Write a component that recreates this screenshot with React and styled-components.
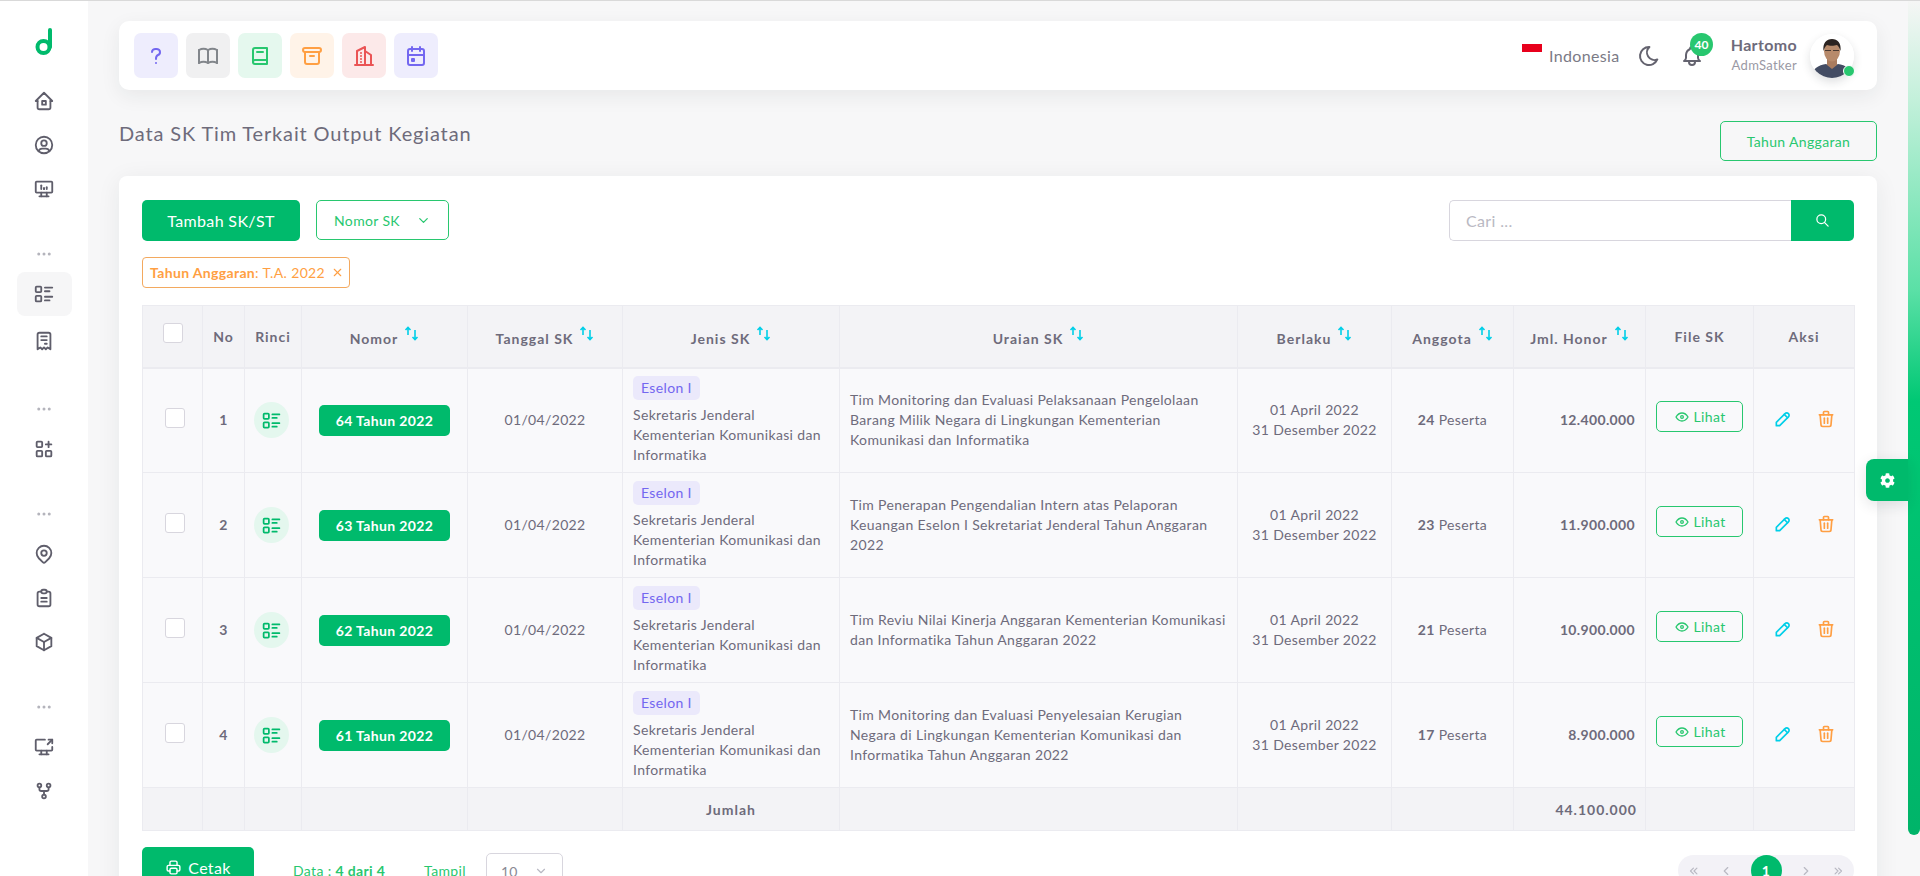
import React from "react";
import styled, { createGlobalStyle } from "styled-components";
import {
    TbApps,
    TbArchive,
    TbBell,
    TbBook,
    TbBook2,
    TbBox,
    TbBuildingSkyscraper,
    TbCalendarEvent,
    TbChevronDown,
    TbChevronLeft,
    TbChevronRight,
    TbChevronsLeft,
    TbChevronsRight,
    TbClipboardText,
    TbDeviceDesktopAnalytics,
    TbDots,
    TbEye,
    TbGitFork,
    TbHome2,
    TbListDetails,
    TbMapPin,
    TbMoon,
    TbPencil,
    TbPrinter,
    TbQuestionMark,
    TbReceipt,
    TbScreenShare,
    TbSearch,
    TbTrash,
    TbUserCircle,
    TbX,
} from "react-icons/tb";
import { FaCog } from "react-icons/fa";

const GREEN = "#00ba6c";
const TEXT = "#6e6b7b";
const LINE = "#ebebf0";

const GlobalStyle = createGlobalStyle`
    * { box-sizing: border-box; }
    html, body {
        margin: 0;
        height: 876px;
        overflow: hidden;
        background: #f7f7f8;
        font-family: "Lato", "Noto Sans", sans-serif;
        font-size: 14px;
        letter-spacing: 0.35px;
        color: ${TEXT};
    }
`;

const Page = styled.div`
    position: relative;
    display: flex;
    height: 876px;
    overflow: hidden;
    border-top: 1px solid #d9d9d9;
`;

const Sidebar = styled.nav`
    width: 88px;
    flex-shrink: 0;
    background: #fff;
    display: flex;
    flex-direction: column;
    align-items: center;
    padding-top: 26px;
`;

const Logo = styled.svg`
    width: 18px;
    height: 28px;
    margin-bottom: 24px;
    margin-left: -1px;
`;

const NavDots = styled.div`
    height: 36px;
    margin-top: ${(p) => p.$top || 25}px;
    color: #b4b4bc;
    font-size: 18px;
    display: flex;
    align-items: center;
    justify-content: center;
`;

const NavItem = styled.div`
    width: 55px;
    height: ${(p) => p.$height || 44}px;
    border-radius: 8px;
    display: flex;
    align-items: center;
    justify-content: center;
    color: #5f5e6b;
    font-size: 22px;
    background: ${(p) => (p.$active ? "#f6f6f7" : "transparent")};
`;

const Main = styled.main`
    flex: 1;
    min-width: 0;
    padding: 20px 43px 0 31px;
`;

const Header = styled.header`
    height: 69px;
    background: #fff;
    border-radius: 10px;
    box-shadow: 0 6px 20px rgba(34, 41, 47, 0.07);
    display: flex;
    align-items: center;
    justify-content: space-between;
    padding: 0 23px 0 15px;
`;

const QuickLinks = styled.div`
    display: flex;
    gap: 8px;
`;

const QuickLink = styled.div`
    width: 44px;
    height: 45px;
    border-radius: 7px;
    display: flex;
    align-items: center;
    justify-content: center;
    font-size: 24px;
    color: ${(p) => p.$color};
    background: ${(p) => p.$bg};
`;

const HeaderRight = styled.div`
    display: flex;
    align-items: center;
`;

const Flag = styled.span`
    width: 20px;
    height: 8px;
    background: #e8001c;
    margin: -2px 7px 0 0;
    align-self: flex-start;
`;

const Language = styled.div`
    display: flex;
    align-items: center;
    font-size: 16px;
    line-height: 20px;
    color: #7b7a86;
    width: 98px;
    height: 20px;
    white-space: nowrap;
`;

const HeaderIcon = styled.div`
    font-size: ${(p) => p.$size || 24}px;
    color: #64636f;
    display: flex;
    margin-left: ${(p) => p.$left}px;
    position: relative;
`;

const Badge = styled.span`
    position: absolute;
    left: 10px;
    top: -11px;
    width: 23px;
    height: 23px;
    border-radius: 50%;
    background: #28c76f;
    color: #fff;
    font-size: 12px;
    font-weight: 700;
    letter-spacing: 0;
    display: flex;
    align-items: center;
    justify-content: center;
`;

const UserInfo = styled.div`
    margin-left: 24px;
    margin-top: -2px;
    text-align: right;
    width: 69px;
`;

const UserName = styled.div`
    font-size: 16px;
    font-weight: 700;
    line-height: 20px;
    white-space: nowrap;
`;

const UserRole = styled.div`
    font-size: 13px;
    line-height: 20px;
    color: #9a99a4;
    white-space: nowrap;
`;

const Avatar = styled.div`
    position: relative;
    width: 44px;
    height: 44px;
    margin-left: 13px;
    border-radius: 50%;
    box-shadow: 0 4px 10px rgba(34, 41, 47, 0.15);
`;

const AvatarImage = styled.svg`
    width: 44px;
    height: 44px;
    display: block;
    border-radius: 50%;
`;

const OnlineDot = styled.span`
    position: absolute;
    right: -1px;
    bottom: 1px;
    width: 12px;
    height: 12px;
    border-radius: 50%;
    background: #28c76f;
    border: 1px solid #fff;
`;

const TitleRow = styled.div`
    display: flex;
    align-items: flex-start;
    justify-content: space-between;
    margin-top: 31px;
    height: 40px;
`;

const PageTitle = styled.h1`
    margin: 0;
    font-size: 20px;
    font-weight: 400;
    line-height: 24px;
    color: #6e6b7b;
    letter-spacing: 0.85px;
`;

const OutlineButton = styled.div`
    width: ${(p) => p.$width}px;
    height: ${(p) => p.$height}px;
    border: 1px solid #28c76f;
    border-radius: 5px;
    color: #28c76f;
    display: flex;
    align-items: center;
    justify-content: center;
    gap: ${(p) => p.$gap || 0}px;
    font-size: 14px;
    background: ${(p) => p.$fill || "transparent"};
`;

const Card = styled.section`
    margin-top: 15px;
    background: #fff;
    border-radius: 8px;
    box-shadow: 0 4px 24px rgba(34, 41, 47, 0.07);
    padding: 24px 23px;
`;

const Toolbar = styled.div`
    display: flex;
    align-items: flex-start;
    gap: 16px;
`;

const SolidButton = styled.div`
    width: ${(p) => p.$width}px;
    height: 41px;
    background: ${GREEN};
    color: #fff;
    border-radius: 5px;
    font-size: 16px;
    display: flex;
    align-items: center;
    justify-content: center;
    gap: 6px;
    flex-shrink: 0;
`;

const Search = styled.div`
    display: flex;
    width: 405px;
    height: 41px;
    margin-left: auto;
`;

const SearchInput = styled.div`
    flex: 1;
    border: 1px solid #d8d6de;
    border-right: 0;
    border-radius: 5px 0 0 5px;
    color: #b9b9c3;
    font-size: 16px;
    padding-left: 16px;
    display: flex;
    align-items: center;
`;

const SearchButton = styled.div`
    width: 63px;
    background: ${GREEN};
    color: #fff;
    border-radius: 0 5px 5px 0;
    font-size: 15px;
    display: flex;
    align-items: center;
    justify-content: center;
`;

const FilterTag = styled.div`
    display: inline-flex;
    align-items: center;
    height: 31px;
    width: 208px;
    margin-top: 16px;
    padding-left: 7px;
    border: 1px solid #f3a95f;
    border-radius: 4px;
    color: #ff9f43;
    font-size: 14px;
    white-space: nowrap;
    b {
        font-weight: 700;
    }
    svg {
        margin-left: 6px;
    }
`;

const Table = styled.table`
    display: table;
    width: 100%;
    margin-top: 17px;
    table-layout: fixed;
    border-collapse: collapse;
    border: 1px solid ${LINE};
`;

const Th = styled.th`
    height: 62px;
    background: #f3f3f6;
    border: 1px solid ${LINE};
    border-bottom-width: 2px;
    font-weight: 700;
    font-size: 14px;
    letter-spacing: 1px;
    color: ${TEXT};
    white-space: nowrap;
    padding: 0;
`;

const Td = styled.td`
    height: 105px;
    padding: 0 10px;
    background: #f9f9fb;
    border: 1px solid ${LINE};
    text-align: ${(p) => p.$align || "center"};
    line-height: 20px;
    font-weight: ${(p) => (p.$bold ? 700 : 400)};
    vertical-align: middle;
`;

const FootCell = styled.td`
    height: 43px;
    padding: 0 8px;
    background: #f3f3f6;
    border: 1px solid ${LINE};
    text-align: ${(p) => p.$align || "center"};
    font-weight: 700;
    letter-spacing: 1px;
`;

const SortIcon = styled.svg`
    width: 15px;
    height: 15px;
    margin-left: 6px;
    vertical-align: 3px;
`;

const CheckBox = styled.span`
    display: block;
    width: 20px;
    height: 20px;
    margin: ${(p) => p.$margin};
    background: #fff;
    border: 1px solid #d8d6de;
    border-radius: 3px;
`;

const RinciButton = styled.div`
    width: 35px;
    height: 36px;
    margin-left: -1px;
    border-radius: 50%;
    background: #e4f7ee;
    color: ${GREEN};
    font-size: 21px;
    display: flex;
    align-items: center;
    justify-content: center;
`;

const NumberBadge = styled.span`
    display: inline-block;
    padding: 0 17px;
    height: 31px;
    line-height: 31px;
    background: ${GREEN};
    color: #fff;
    border-radius: 5px;
    font-weight: 700;
    font-size: 14px;
    white-space: nowrap;
`;

const LevelPill = styled.span`
    display: inline-block;
    height: 24px;
    line-height: 24px;
    padding: 0 8px;
    background: #ebe9fb;
    color: #7367f0;
    border-radius: 5px;
    margin-bottom: 5px;
`;

const ActionRow = styled.div`
    display: flex;
    align-items: center;
    justify-content: center;
    gap: 23px;
    margin-top: -3px;
`;

const ActionIcon = styled.span`
    display: flex;
    font-size: 20px;
    color: ${(p) => p.$color};
`;

const FileCell = styled.div`
    display: flex;
    justify-content: center;
    margin-bottom: 7px;
`;

const TableFooter = styled.div`
    display: flex;
    align-items: flex-start;
    margin-top: 16px;
`;

const DataInfo = styled.div`
    color: #28c76f;
    margin: 14px 0 0 39px;
    white-space: nowrap;
    line-height: 20px;
`;

const PageSize = styled.div`
    width: 77px;
    height: 36px;
    margin: 6px 0 0 20px;
    border: 1px solid #d8d6de;
    border-radius: 5px;
    padding: 0 14px;
    display: flex;
    align-items: center;
    justify-content: space-between;
    color: #8a8994;
    svg {
        color: #b9b9c3;
    }
`;

const Pagination = styled.div`
    margin: 8px 0 0 auto;
    width: 176px;
    height: 31px;
    border-radius: 16px;
    background: #f3f2f7;
    display: flex;
    align-items: center;
    justify-content: space-between;
    padding: 0 9px;
    color: #b9b9c3;
    font-size: 14px;
`;

const PageCurrent = styled.span`
    width: 31px;
    height: 31px;
    border-radius: 50%;
    background: ${GREEN};
    color: #fff;
    font-weight: 700;
    display: flex;
    align-items: center;
    justify-content: center;
`;

const ScrollThumb = styled.div`
    position: absolute;
    top: 0;
    right: 0;
    width: 12px;
    height: 834px;
    border-radius: 0 0 8px 8px;
    background: linear-gradient(#f5f6f5 0, #c2f0da 100px, #5ae0a6 290px, #00c874 400px, #00b469 100%);
`;

const SettingsTab = styled.div`
    position: absolute;
    top: 458px;
    right: 12px;
    width: 42px;
    height: 42px;
    border-radius: 8px 0 0 8px;
    background: ${GREEN};
    color: #fff;
    font-size: 15px;
    display: flex;
    align-items: center;
    justify-content: center;
    box-shadow: 0 4px 14px rgba(34, 41, 47, 0.12);
`;

const quickLinks = [
    { icon: TbQuestionMark, color: "#7367f0", bg: "#eeedfd" },
    { icon: TbBook, color: "#82868b", bg: "#f0f0f1" },
    { icon: TbBook2, color: "#28c76f", bg: "#e5f8ee" },
    { icon: TbArchive, color: "#ff9f43", bg: "#fff3e8" },
    { icon: TbBuildingSkyscraper, color: "#ea5455", bg: "#fce9e9" },
    { icon: TbCalendarEvent, color: "#7367f0", bg: "#eeedfd" },
];

const columns = [
    { width: 60 },
    { label: "No", width: 42 },
    { label: "Rinci", width: 57 },
    { label: "Nomor", width: 166, sort: true },
    { label: "Tanggal SK", width: 155, sort: true },
    { label: "Jenis SK", width: 217, sort: true },
    { label: "Uraian SK", width: 398, sort: true },
    { label: "Berlaku", width: 154, sort: true },
    { label: "Anggota", width: 122, sort: true },
    { label: "Jml. Honor", width: 132, sort: true },
    { label: "File SK", width: 108 },
    { label: "Aksi", width: 101 },
];

const rows = [
    {
        no: 1,
        nomor: "64 Tahun 2022",
        uraian: "Tim Monitoring dan Evaluasi Pelaksanaan Pengelolaan Barang Milik Negara di Lingkungan Kementerian Komunikasi dan Informatika",
        anggota: 24,
        honor: "12.400.000",
    },
    {
        no: 2,
        nomor: "63 Tahun 2022",
        uraian: "Tim Penerapan Pengendalian Intern atas Pelaporan Keuangan Eselon I Sekretariat Jenderal Tahun Anggaran 2022",
        anggota: 23,
        honor: "11.900.000",
    },
    {
        no: 3,
        nomor: "62 Tahun 2022",
        uraian: "Tim Reviu Nilai Kinerja Anggaran Kementerian Komunikasi dan Informatika Tahun Anggaran 2022",
        anggota: 21,
        honor: "10.900.000",
    },
    {
        no: 4,
        nomor: "61 Tahun 2022",
        uraian: "Tim Monitoring dan Evaluasi Penyelesaian Kerugian Negara di Lingkungan Kementerian Komunikasi dan Informatika Tahun Anggaran 2022",
        anggota: 17,
        honor: "8.900.000",
    },
];

const SortArrows = () => (
    <SortIcon viewBox="0 0 15 15" fill="none" stroke="#00cfe8" strokeWidth="1.6">
        <path d="M4 9V1.5M1.5 4L4 1.5 6.5 4" />
        <path d="M11 4v9.5M8.5 11l2.5 2.5 2.5-2.5" />
    </SortIcon>
);

const Portrait = () => (
    <AvatarImage viewBox="0 0 44 44">
        <rect width="44" height="44" fill="#fff" />
        <path d="M1 44c0-9 8-13 15-14l6 3 6-3c7 1 15 5 15 14z" fill="#434c63" />
        <path d="M17 25h10v6l-5 4-5-4z" fill="#a97c5f" />
        <ellipse cx="22" cy="17" rx="8" ry="10.5" fill="#b78a6b" />
        <path d="M13.5 17c-1-8 3-12 8.500-12s9.500 4 8.500 12c-1-3-2-5-3.500-6-3 1-8 1-10 0-1.500 1-2.500 3-3.500 6z" fill="#2b2320" />
        <path d="M15 16.500h6M23 16.500h6" stroke="#4a3a33" strokeWidth="1" />
    </AvatarImage>
);

const App = () => {
    return (
        <Page>
            <GlobalStyle />
            <Sidebar>
                <Logo viewBox="0 0 18 28" fill="none" stroke="#00ba6c" strokeWidth="4" strokeLinecap="round">
                    <circle cx="8.500" cy="20" r="6" />
                    <path d="M15 20V3" />
                </Logo>
                <NavItem><TbHome2 /></NavItem>
                <NavItem><TbUserCircle /></NavItem>
                <NavItem><TbDeviceDesktopAnalytics /></NavItem>
                <NavDots><TbDots /></NavDots>
                <NavItem $active><TbListDetails /></NavItem>
                <NavItem $height={50}><TbReceipt /></NavItem>
                <NavDots><TbDots /></NavDots>
                <NavItem><TbApps /></NavItem>
                <NavDots><TbDots /></NavDots>
                <NavItem><TbMapPin /></NavItem>
                <NavItem><TbClipboardText /></NavItem>
                <NavItem><TbBox /></NavItem>
                <NavDots><TbDots /></NavDots>
                <NavItem><TbScreenShare /></NavItem>
                <NavItem><TbGitFork /></NavItem>
            </Sidebar>
            <Main>
                <Header>
                    <QuickLinks>
                        {quickLinks.map(({ icon: Icon, color, bg }, index) => (
                            <QuickLink key={index} $color={color} $bg={bg}>
                                <Icon />
                            </QuickLink>
                        ))}
                    </QuickLinks>
                    <HeaderRight>
                        <Language>
                            <Flag />
                            Indonesia
                        </Language>
                        <HeaderIcon $left={17} $size={24}>
                            <TbMoon />
                        </HeaderIcon>
                        <HeaderIcon $left={19} $size={24}>
                            <TbBell />
                            <Badge>40</Badge>
                        </HeaderIcon>
                        <UserInfo>
                            <UserName>Hartomo</UserName>
                            <UserRole>AdmSatker</UserRole>
                        </UserInfo>
                        <Avatar>
                            <Portrait />
                            <OnlineDot />
                        </Avatar>
                    </HeaderRight>
                </Header>
                <TitleRow>
                    <PageTitle>Data SK Tim Terkait Output Kegiatan</PageTitle>
                    <OutlineButton $width={157} $height={40}>Tahun Anggaran</OutlineButton>
                </TitleRow>
                <Card>
                    <Toolbar>
                        <SolidButton $width={158}>Tambah SK/ST</SolidButton>
                        <OutlineButton $width={133} $height={40} $gap={16} $fill="#fff">
                            Nomor SK
                            <TbChevronDown size={15} />
                        </OutlineButton>
                        <Search>
                            <SearchInput>Cari ...</SearchInput>
                            <SearchButton><TbSearch /></SearchButton>
                        </Search>
                    </Toolbar>
                    <FilterTag>
                        <b>Tahun Anggaran</b>: T.A. 2022
                        <TbX size={13} />
                    </FilterTag>
                    <Table>
                        <colgroup>
                            {columns.map((col, index) => (
                                <col key={index} width={col.width} />
                            ))}
                        </colgroup>
                        <thead>
                            <tr>
                                {columns.map((col, index) => (
                                    <Th key={index}>
                                        {col.label || <CheckBox $margin="-6px 0 0 20px" />}
                                        {col.sort && <SortArrows />}
                                    </Th>
                                ))}
                            </tr>
                        </thead>
                        <tbody>
                            {rows.map((row) => (
                                <tr key={row.no}>
                                    <Td><CheckBox $margin="-4px 0 0 12px" /></Td>
                                    <Td $bold>{row.no}</Td>
                                    <Td><RinciButton><TbListDetails /></RinciButton></Td>
                                    <Td><NumberBadge>{row.nomor}</NumberBadge></Td>
                                    <Td>01/04/2022</Td>
                                    <Td $align="left">
                                        <LevelPill>Eselon I</LevelPill>
                                        <br />
                                        Sekretaris Jenderal Kementerian Komunikasi dan Informatika
                                    </Td>
                                    <Td $align="left">{row.uraian}</Td>
                                    <Td>
                                        01 April 2022
                                        <br />
                                        31 Desember 2022
                                    </Td>
                                    <Td><b>{row.anggota}</b> Peserta</Td>
                                    <Td $align="right" $bold>{row.honor}</Td>
                                    <Td>
                                        <FileCell>
                                            <OutlineButton $width={88} $height={31} $gap={4}>
                                                <TbEye size={16} />
                                                Lihat
                                            </OutlineButton>
                                        </FileCell>
                                    </Td>
                                    <Td>
                                        <ActionRow>
                                            <ActionIcon $color="#00cfe8"><TbPencil /></ActionIcon>
                                            <ActionIcon $color="#ff9f43"><TbTrash /></ActionIcon>
                                        </ActionRow>
                                    </Td>
                                </tr>
                            ))}
                        </tbody>
                        <tfoot>
                            <tr>
                                <FootCell />
                                <FootCell />
                                <FootCell />
                                <FootCell />
                                <FootCell />
                                <FootCell>Jumlah</FootCell>
                                <FootCell />
                                <FootCell />
                                <FootCell />
                                <FootCell $align="right">44.100.000</FootCell>
                                <FootCell />
                                <FootCell />
                            </tr>
                        </tfoot>
                    </Table>
                    <TableFooter>
                        <SolidButton $width={112}>
                            <TbPrinter size={17} />
                            Cetak
                        </SolidButton>
                        <DataInfo>Data : <b>4 dari 4</b></DataInfo>
                        <DataInfo>Tampil</DataInfo>
                        <PageSize>
                            10
                            <TbChevronDown size={14} />
                        </PageSize>
                        <Pagination>
                            <TbChevronsLeft />
                            <TbChevronLeft />
                            <PageCurrent>1</PageCurrent>
                            <TbChevronRight />
                            <TbChevronsRight />
                        </Pagination>
                    </TableFooter>
                </Card>
            </Main>
            <ScrollThumb />
            <SettingsTab><FaCog /></SettingsTab>
        </Page>
    );
};

export default App;
